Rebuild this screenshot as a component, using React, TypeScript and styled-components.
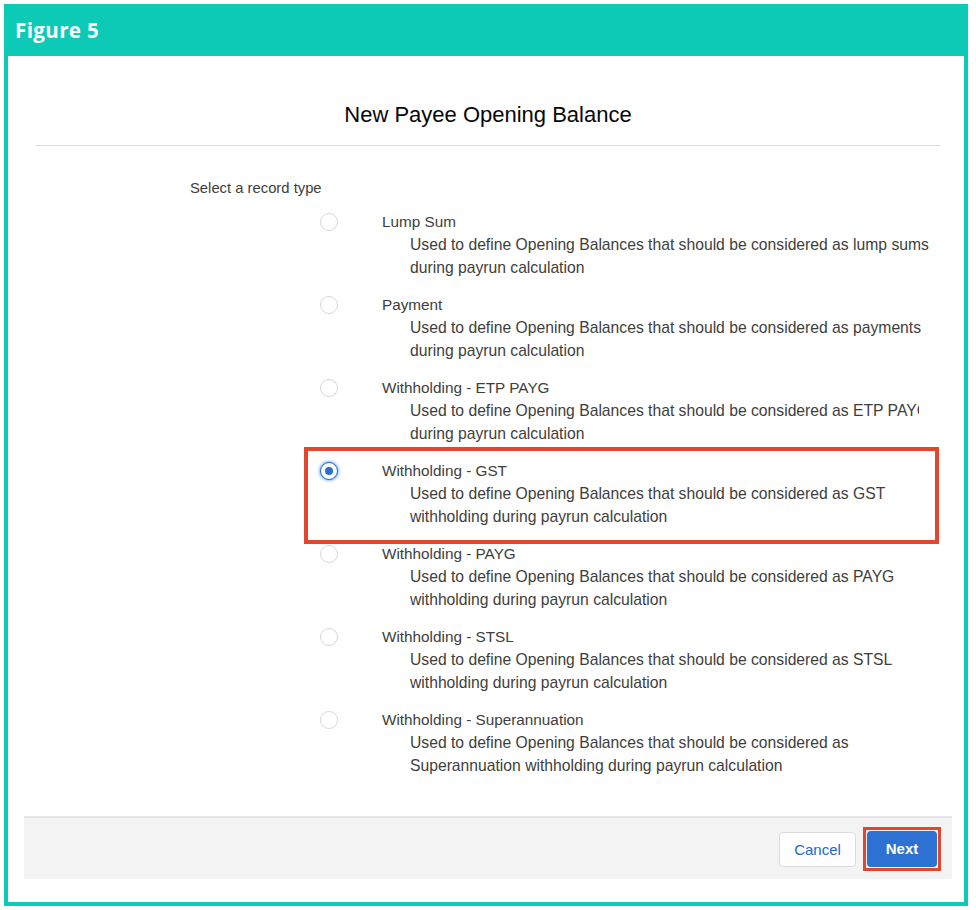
import React from "react";
import styled, { createGlobalStyle } from "styled-components";

const GlobalStyle = createGlobalStyle`
  html, body { margin: 0; padding: 0; background: #ffffff; }
  body { font-family: "Liberation Sans", Arial, sans-serif; }
  * { box-sizing: border-box; }
`;

const Page = styled.div`
  width: 976px;
  height: 910px;
  padding: 4px 4px 4px 4px;
  background: #ffffff;
`;

const Frame = styled.div`
  width: 964px;
  height: 902px;
  border: 4px solid #0ccab6;
  display: flex;
  flex-direction: column;
`;

const FigureHeader = styled.div`
  height: 48px;
  background: #0ccab6;
  color: #ffffff;
  font-family: "Open Sans", "Lato", sans-serif;
  font-weight: 700;
  font-size: 20.5px;
  line-height: 24px;
  padding: 10px 0 0 7px;
  letter-spacing: 0.4px;
`;

const Body = styled.div`
  flex: 1;
  padding: 0 12px 0 16px;
  display: flex;
  flex-direction: column;
`;

const Modal = styled.div`
  flex: 1;
  display: flex;
  flex-direction: column;
`;

const TitleBar = styled.div`
  margin: 0 12px;
  padding: 46px 0 18px;
  border-bottom: 1px solid #dddbda;
  text-align: center;
  font-size: 22px;
  line-height: 25px;
  color: #080707;
`;

const Content = styled.div`
  flex: 1;
  padding: 33px 0 0 166px;
  color: #3e3e3c;
`;

const Prompt = styled.div`
  font-size: 14.8px;
  line-height: 18px;
  color: #3e3e3c;
`;

const OptionList = styled.div`
  margin: 14px 0 0 130px;
  display: flex;
  flex-direction: column;
  gap: 15px;
`;

const Option = styled.div<{ $highlight?: boolean }>`
  position: relative;
  display: grid;
  grid-template-columns: 18px 1fr;
  column-gap: 44px;
  ${(p) =>
    p.$highlight &&
    `
    &::after {
      content: "";
      position: absolute;
      top: -13px;
      left: -16px;
      width: 627px;
      height: 89px;
      border: 4px solid #e2472d;
      pointer-events: none;
    }
  `}
`;

const Radio = styled.span<{ $checked?: boolean }>`
  width: 18px;
  height: 18px;
  margin-top: 2px;
  border-radius: 50%;
  border: 1px solid ${(p) => (p.$checked ? "#1b6ac9" : "#d8d8d8")};
  background: #ffffff;
  display: flex;
  align-items: center;
  justify-content: center;
  box-shadow: ${(p) => (p.$checked ? "0 0 3px 1px #84b4ee" : "none")};
  &::before {
    content: "";
    width: 8px;
    height: 8px;
    border-radius: 50%;
    background: ${(p) => (p.$checked ? "#2a6fd0" : "transparent")};
  }
`;

const OptionText = styled.div`
  display: flex;
  flex-direction: column;
`;

const OptionLabel = styled.div`
  font-size: 15.3px;
  line-height: 22px;
  color: #3e3e3c;
`;

const OptionDesc = styled.div`
  padding-left: 28px;
  font-size: 15.7px;
  line-height: 23px;
  color: #3e3e3c;
  white-space: nowrap;
`;

const DescLine = styled.span<{ $clip?: number }>`
  display: block;
  overflow: hidden;
  ${(p) => (p.$clip ? `width: ${p.$clip}px;` : "")}
`;

const Footer = styled.div`
  height: 63px;
  margin-bottom: 23px;
  background: #f3f3f3;
  border-top: 2px solid #e5e5e5;
  display: flex;
  align-items: center;
  justify-content: flex-end;
  padding-right: 11px;
  gap: 7px;
`;

const CancelButton = styled.button`
  width: 77px;
  height: 35px;
  border: 1px solid #dddbda;
  border-radius: 4px;
  background: #ffffff;
  color: #1b6ac9;
  font-family: "Liberation Sans", Arial, sans-serif;
  font-size: 15px;
  margin-top: 2px;
`;

const NextWrap = styled.div`
  border: 3px solid #e2472d;
  padding: 1px;
  width: 78px;
  height: 44px;
  display: flex;
`;

const NextButton = styled.button`
  flex: 1;
  border: none;
  border-radius: 4px;
  background: #2d72d2;
  color: #ffffff;
  font-family: "Liberation Sans", Arial, sans-serif;
  font-size: 15px;
  font-weight: 700;
`;

type Opt = { label: string; lines: string[]; clip?: number; checked?: boolean };

const options: Opt[] = [
  {
    label: "Lump Sum",
    lines: [
      "Used to define Opening Balances that should be considered as lump sums",
      "during payrun calculation",
    ],
  },
  {
    label: "Payment",
    lines: [
      "Used to define Opening Balances that should be considered as payments",
      "during payrun calculation",
    ],
  },
  {
    label: "Withholding - ETP PAYG",
    lines: [
      "Used to define Opening Balances that should be considered as ETP PAYG",
      "during payrun calculation",
    ],
    clip: 509,
  },
  {
    label: "Withholding - GST",
    lines: [
      "Used to define Opening Balances that should be considered as GST",
      "withholding during payrun calculation",
    ],
    checked: true,
  },
  {
    label: "Withholding - PAYG",
    lines: [
      "Used to define Opening Balances that should be considered as PAYG",
      "withholding during payrun calculation",
    ],
  },
  {
    label: "Withholding - STSL",
    lines: [
      "Used to define Opening Balances that should be considered as STSL",
      "withholding during payrun calculation",
    ],
  },
  {
    label: "Withholding - Superannuation",
    lines: [
      "Used to define Opening Balances that should be considered as",
      "Superannuation withholding during payrun calculation",
    ],
  },
];

export default function App() {
  return (
    <>
      <GlobalStyle />
      <Page>
        <Frame>
          <FigureHeader>Figure 5</FigureHeader>
          <Body>
            <Modal>
              <TitleBar>New Payee Opening Balance</TitleBar>
              <Content>
                <Prompt>Select a record type</Prompt>
                <OptionList>
                  {options.map((o) => (
                    <Option key={o.label} $highlight={o.checked}>
                      <Radio $checked={o.checked} />
                      <OptionText>
                        <OptionLabel>{o.label}</OptionLabel>
                        <OptionDesc>
                          {o.lines.map((l, i) => (
                            <DescLine key={i} $clip={i === 0 ? o.clip : undefined}>
                              {l}
                            </DescLine>
                          ))}
                        </OptionDesc>
                      </OptionText>
                    </Option>
                  ))}
                </OptionList>
              </Content>
              <Footer>
                <CancelButton>Cancel</CancelButton>
                <NextWrap>
                  <NextButton>Next</NextButton>
                </NextWrap>
              </Footer>
            </Modal>
          </Body>
        </Frame>
      </Page>
    </>
  );
}
